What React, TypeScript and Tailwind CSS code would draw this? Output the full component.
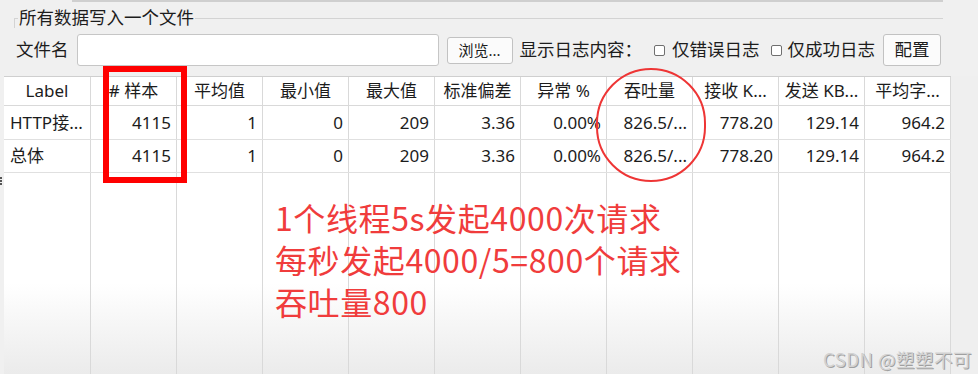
import React from 'react';

const headers = ['Label', '# 样本', '平均值', '最小值', '最大值', '标准偏差', '异常 %', '吞吐量', '接收 K...', '发送 KB...', '平均字...'];

const rows = [
    ['HTTP接...', '4115', '1', '0', '209', '3.36', '0.00%', '826.5/...', '778.20', '129.14', '964.2'],
    ['总体', '4115', '1', '0', '209', '3.36', '0.00%', '826.5/...', '778.20', '129.14', '964.2'],
];

const cols = 'grid grid-cols-[87px_repeat(10,86px)]';

function Checkbox() {
    return <span className="inline-block w-[11px] h-[11px] rounded-[2px] border border-[#6f6f6f] bg-white" />;
}

export default function App() {
    return (
        <div className="relative w-[978px] h-[374px] overflow-hidden bg-[#f0f0f0] text-[#1c1c1c] font-['Noto_Sans','Noto_Sans_CJK_SC',sans-serif]">
            <div className="flex h-full">
                {/* splitter */}
                <div className="relative w-[4px] shrink-0">
                    <div className="absolute left-0 top-[177px] flex flex-col gap-[1px]">
                        <span className="w-[2px] h-[2px] bg-[#555]" />
                        <span className="w-[2px] h-[2px] bg-[#555]" />
                        <span className="w-[2px] h-[2px] bg-[#555]" />
                    </div>
                </div>

                <div className="flex flex-col flex-1 min-w-0">
                    {/* top band */}
                    <div className="ml-[68px] w-[871px] h-[2px] bg-[#cfcfcf]" />

                    {/* legend */}
                    <div className="flex items-center h-[32px] pl-[10px] pr-[35px]">
                        <div className="relative w-[4px] h-px bg-[#d3d3d3]">
                            <span className="absolute left-0 top-0 w-px h-[10px] bg-[#d3d3d3]" />
                        </div>
                        <span className="px-[1px] text-[17.5px] leading-none">所有数据写入一个文件</span>
                        <div className="flex-1 h-px bg-[#d3d3d3]" />
                    </div>

                    {/* toolbar */}
                    <div className="flex items-center h-[32px] pl-[12px] text-[17.5px] leading-none">
                        <span>文件名</span>
                        <div className="ml-[8px] w-[362px] h-[32px] bg-white border border-[#c6c6c6] rounded-[3px]" />
                        <button className="ml-[8px] w-[66px] h-[27px] bg-[#fbfbfb] border border-[#c2c2c2] rounded-[3px] text-[15px] flex items-center justify-center">浏览...</button>
                        <span className="ml-[7px]">显示日志内容：</span>
                        <span className="ml-[12px] flex items-center"><Checkbox /></span>
                        <span className="ml-[7px]">仅错误日志</span>
                        <span className="ml-[11px] flex items-center"><Checkbox /></span>
                        <span className="ml-[6px]">仅成功日志</span>
                        <button className="ml-[8px] w-[58px] h-[32px] bg-[#fbfbfb] border border-[#c2c2c2] rounded-[3px] text-[17.5px] flex items-center justify-center">配置</button>
                    </div>

                    {/* results table */}
                    <div className="flex flex-1 mt-[10px] min-h-0">
                        <div className="flex flex-col w-[947px] bg-white border-t border-[#cfcfcf] text-[17px]">
                            <div className={`${cols} h-[29px] border-b border-[#d9d9d9]`}>
                                {headers.map((h, i) => (
                                    <div key={i} className="flex items-center justify-center border-r border-[#d9d9d9] whitespace-nowrap">{h}</div>
                                ))}
                            </div>
                            {rows.map((r, ri) => (
                                <div key={ri} className={`${cols} ${ri === 0 ? 'h-[34px]' : 'h-[33px]'} border-b border-[#e0e0e0]`}>
                                    {r.map((c, i) => (
                                        <div key={i} className={`flex items-center border-r border-[#d9d9d9] whitespace-nowrap ${i === 0 ? 'pl-[6px]' : 'justify-end pr-[5px]'}`}>{c}</div>
                                    ))}
                                </div>
                            ))}
                            <div className={`${cols} flex-1 bg-linear-to-b from-white from-55% to-[#ebebeb]`}>
                                {headers.map((_, i) => (
                                    <div key={i} className="border-r border-[#d9d9d9]" />
                                ))}
                            </div>
                        </div>
                        <div className="flex-1 bg-[#efefef]" />
                    </div>
                </div>
            </div>

            {/* annotations */}
            <div className="absolute left-[103px] top-[66px] w-[84px] h-[117px] border-[6px] border-[#ff0000]" />
            <div className="absolute left-[596px] top-[68px] w-[110px] h-[114px] rounded-full border-2 border-[#ee3535]" />
            <div className="absolute left-[275px] top-[196px] text-[32px] leading-[42px] tracking-[0.6px] text-[#f03c3c] font-['Noto_Sans_CJK_SC',sans-serif] whitespace-nowrap">
                <div>1个线程5s发起4000次请求</div>
                <div>每秒发起4000/5=800个请求</div>
                <div>吞吐量800</div>
            </div>
            <div className="absolute right-[6px] bottom-[6px] text-[18.5px] leading-none tracking-[0.5px] text-[#d2d2d2] font-['Noto_Sans_CJK_SC',sans-serif] [text-shadow:1px_1px_0_#a0a0a0]">
                CSDN @塑塑不可
            </div>
        </div>
    );
}
